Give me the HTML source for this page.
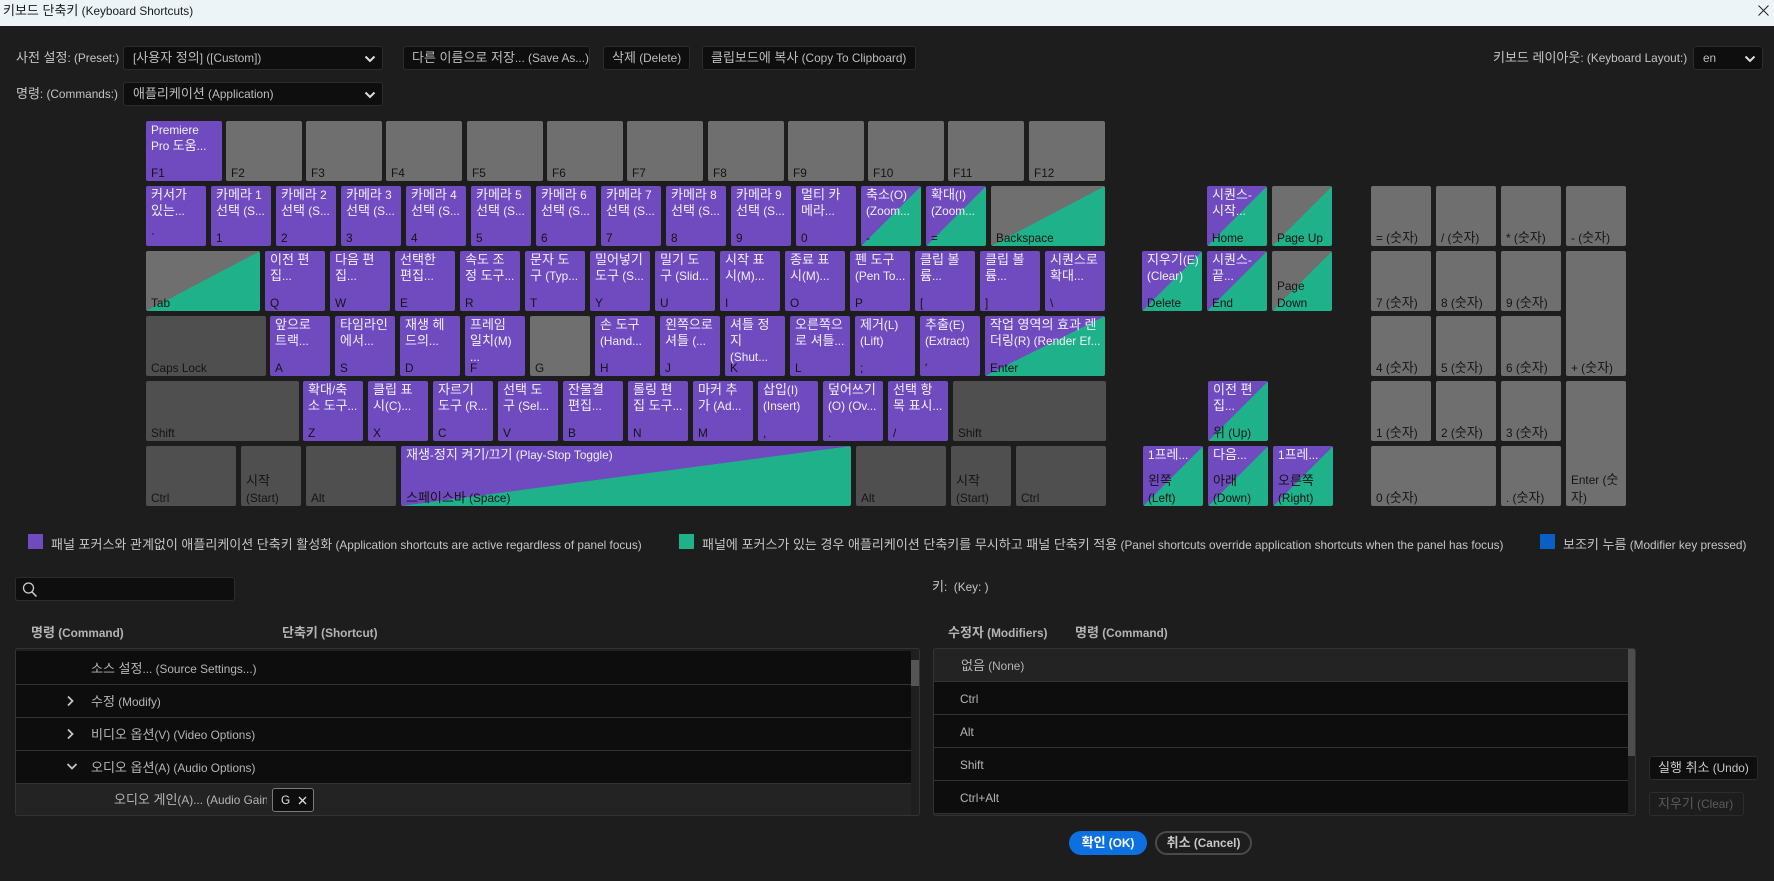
<!DOCTYPE html>
<html lang="ko"><head><meta charset="utf-8"><title>키보드 단축키 (Keyboard Shortcuts)</title>
<style>
html,body{margin:0;padding:0;background:#1d1d1d}
body{position:relative;width:1774px;height:881px;overflow:hidden;font:11.8px/16px "Liberation Sans","Noto Sans CJK KR",sans-serif;color:#c4c4c4}
div,span,svg{position:absolute;box-sizing:border-box}
span.ko{position:static;font-size:13px}
.l{white-space:nowrap}
.tb{left:0;top:0;width:1774px;height:26px;background:#ecf4f8;color:#1a1a1a}
.dd,.bt{background:#0e0e0e;border:1px solid #2c2c2c;border-radius:3px;height:24px;line-height:22px;padding-left:8px;color:#bdbdbd;white-space:nowrap}
.dd{padding-left:9px}
.k{border-radius:2px;color:#f2f0f8;overflow:hidden}
.p{background:#6f4bbf}
.g{background:#6f6f6f}
.d{background:#4f4f4f}
.pg{background:linear-gradient(to bottom right,#6f4bbf 50%,#1fb189 50.1%)}
.gg{background:linear-gradient(to bottom right,#6f6f6f 50%,#1fb189 50.1%)}
.t{left:5px;top:1px;right:2px;white-space:nowrap}
.b{left:5px;bottom:-1px;color:#141414;white-space:nowrap;line-height:17px}
.h{font-weight:bold;color:#b4b4b4;white-space:nowrap}
.r{left:0;height:33px;background:#0d0d0d;border-bottom:1px solid #333;white-space:nowrap;line-height:32px;color:#b5b5b5}
</style></head><body>
<div class="tb"><span class="l" style="left:3px;top:3px">키보드 단축키 (Keyboard Shortcuts)</span>
<svg style="left:1758px;top:5px" width="11" height="11" viewBox="0 0 11 11"><path d="M.5.5l10 10M10.5.5l-10 10" stroke="#222" fill="none"/></svg></div>

<span class="l" style="left:16px;top:50px">사전 설정: (Preset:)</span>
<div class="dd" style="left:123px;top:46px;width:260px">[사용자 정의] ([Custom])<svg style="left:240px;top:8px" width="12" height="8" viewBox="0 0 12 8"><path d="M1.500 1.500L6 6l4.500-4.500" stroke="#ddd" stroke-width="2" fill="none"/></svg></div>
<span class="l" style="left:16px;top:86px">명령: (Commands:)</span>
<div class="dd" style="left:123px;top:82px;width:260px">애플리케이션 (Application)<svg style="left:240px;top:8px" width="12" height="8" viewBox="0 0 12 8"><path d="M1.500 1.500L6 6l4.500-4.500" stroke="#ddd" stroke-width="2" fill="none"/></svg></div>
<div class="bt" style="left:403px;top:46px;width:187px">다른 이름으로 저장... (Save As...)</div>
<div class="bt" style="left:603px;top:46px;width:87px">삭제 (Delete)</div>
<div class="bt" style="left:702px;top:46px;width:214px">클립보드에 복사 (Copy To Clipboard)</div>
<span class="l" style="left:1493px;top:50px">키보드 레이아웃: (Keyboard Layout:)</span>
<div class="dd" style="left:1693px;top:46px;width:70px">en<svg style="left:50px;top:8px" width="12" height="8" viewBox="0 0 12 8"><path d="M1.500 1.500L6 6l4.500-4.500" stroke="#ddd" stroke-width="2" fill="none"/></svg></div>

<!-- F row -->
<div class="k p" style="left:146px;top:121px;width:76px;height:60px"><span class="t">Premiere<br>Pro 도움...</span><span class="b">F1</span></div>
<div class="k g" style="left:226px;top:121px;width:76px;height:60px"><span class="b">F2</span></div>
<div class="k g" style="left:306px;top:121px;width:76px;height:60px"><span class="b">F3</span></div>
<div class="k g" style="left:386px;top:121px;width:76px;height:60px"><span class="b">F4</span></div>
<div class="k g" style="left:467px;top:121px;width:76px;height:60px"><span class="b">F5</span></div>
<div class="k g" style="left:547px;top:121px;width:76px;height:60px"><span class="b">F6</span></div>
<div class="k g" style="left:627px;top:121px;width:76px;height:60px"><span class="b">F7</span></div>
<div class="k g" style="left:708px;top:121px;width:76px;height:60px"><span class="b">F8</span></div>
<div class="k g" style="left:788px;top:121px;width:76px;height:60px"><span class="b">F9</span></div>
<div class="k g" style="left:868px;top:121px;width:76px;height:60px"><span class="b">F10</span></div>
<div class="k g" style="left:948px;top:121px;width:76px;height:60px"><span class="b">F11</span></div>
<div class="k g" style="left:1029px;top:121px;width:76px;height:60px"><span class="b">F12</span></div>

<!-- number row -->
<div class="k p" style="left:146px;top:186px;width:60px;height:60px"><span class="t">커서가<br>있는...</span><span class="b">`</span></div>
<div class="k p" style="left:211px;top:186px;width:60px;height:60px"><span class="t">카메라 1<br>선택 (S...</span><span class="b">1</span></div>
<div class="k p" style="left:276px;top:186px;width:60px;height:60px"><span class="t">카메라 2<br>선택 (S...</span><span class="b">2</span></div>
<div class="k p" style="left:341px;top:186px;width:60px;height:60px"><span class="t">카메라 3<br>선택 (S...</span><span class="b">3</span></div>
<div class="k p" style="left:406px;top:186px;width:60px;height:60px"><span class="t">카메라 4<br>선택 (S...</span><span class="b">4</span></div>
<div class="k p" style="left:471px;top:186px;width:60px;height:60px"><span class="t">카메라 5<br>선택 (S...</span><span class="b">5</span></div>
<div class="k p" style="left:536px;top:186px;width:60px;height:60px"><span class="t">카메라 6<br>선택 (S...</span><span class="b">6</span></div>
<div class="k p" style="left:601px;top:186px;width:60px;height:60px"><span class="t">카메라 7<br>선택 (S...</span><span class="b">7</span></div>
<div class="k p" style="left:666px;top:186px;width:60px;height:60px"><span class="t">카메라 8<br>선택 (S...</span><span class="b">8</span></div>
<div class="k p" style="left:731px;top:186px;width:60px;height:60px"><span class="t">카메라 9<br>선택 (S...</span><span class="b">9</span></div>
<div class="k p" style="left:796px;top:186px;width:60px;height:60px"><span class="t">멀티 카<br>메라...</span><span class="b">0</span></div>
<div class="k pg" style="left:861px;top:186px;width:60px;height:60px"><span class="t">축소(O)<br>(Zoom...</span><span class="b">-</span></div>
<div class="k pg" style="left:926px;top:186px;width:60px;height:60px"><span class="t">확대(I)<br>(Zoom...</span><span class="b">=</span></div>
<div class="k gg" style="left:991px;top:186px;width:114px;height:60px"><span class="b">Backspace</span></div>

<!-- Q row -->
<div class="k gg" style="left:146px;top:251px;width:114px;height:60px"><span class="b">Tab</span></div>
<div class="k p" style="left:265px;top:251px;width:60px;height:60px"><span class="t">이전 편<br>집...</span><span class="b">Q</span></div>
<div class="k p" style="left:330px;top:251px;width:60px;height:60px"><span class="t">다음 편<br>집...</span><span class="b">W</span></div>
<div class="k p" style="left:395px;top:251px;width:60px;height:60px"><span class="t">선택한<br>편집...</span><span class="b">E</span></div>
<div class="k p" style="left:460px;top:251px;width:60px;height:60px"><span class="t">속도 조<br>정 도구...</span><span class="b">R</span></div>
<div class="k p" style="left:525px;top:251px;width:60px;height:60px"><span class="t">문자 도<br>구 (Typ...</span><span class="b">T</span></div>
<div class="k p" style="left:590px;top:251px;width:60px;height:60px"><span class="t">밀어넣기<br>도구 (S...</span><span class="b">Y</span></div>
<div class="k p" style="left:655px;top:251px;width:60px;height:60px"><span class="t">밀기 도<br>구 (Slid...</span><span class="b">U</span></div>
<div class="k p" style="left:720px;top:251px;width:60px;height:60px"><span class="t">시작 표<br>시(M)...</span><span class="b">I</span></div>
<div class="k p" style="left:785px;top:251px;width:60px;height:60px"><span class="t">종료 표<br>시(M)...</span><span class="b">O</span></div>
<div class="k p" style="left:850px;top:251px;width:60px;height:60px"><span class="t">펜 도구<br>(Pen To...</span><span class="b">P</span></div>
<div class="k p" style="left:915px;top:251px;width:60px;height:60px"><span class="t">클립 볼<br>륨...</span><span class="b">[</span></div>
<div class="k p" style="left:980px;top:251px;width:60px;height:60px"><span class="t">클립 볼<br>륨...</span><span class="b">]</span></div>
<div class="k p" style="left:1045px;top:251px;width:60px;height:60px"><span class="t">시퀀스로<br>확대...</span><span class="b">\</span></div>

<!-- A row -->
<div class="k d" style="left:146px;top:316px;width:120px;height:60px"><span class="b">Caps Lock</span></div>
<div class="k p" style="left:270px;top:316px;width:60px;height:60px"><span class="t">앞으로<br>트랙...</span><span class="b">A</span></div>
<div class="k p" style="left:335px;top:316px;width:60px;height:60px"><span class="t">타임라인<br>에서...</span><span class="b">S</span></div>
<div class="k p" style="left:400px;top:316px;width:60px;height:60px"><span class="t">재생 헤<br>드의...</span><span class="b">D</span></div>
<div class="k p" style="left:465px;top:316px;width:60px;height:60px"><span class="t">프레임<br>일치(M)<br>...</span><span class="b">F</span></div>
<div class="k g" style="left:530px;top:316px;width:60px;height:60px"><span class="b">G</span></div>
<div class="k p" style="left:595px;top:316px;width:60px;height:60px"><span class="t">손 도구<br>(Hand...</span><span class="b">H</span></div>
<div class="k p" style="left:660px;top:316px;width:60px;height:60px"><span class="t">왼쪽으로<br>셔틀 (...</span><span class="b">J</span></div>
<div class="k p" style="left:725px;top:316px;width:60px;height:60px"><span class="t">셔틀 정<br>지<br>(Shut...</span><span class="b">K</span></div>
<div class="k p" style="left:790px;top:316px;width:60px;height:60px"><span class="t">오른쪽으<br>로 셔틀...</span><span class="b">L</span></div>
<div class="k p" style="left:855px;top:316px;width:60px;height:60px"><span class="t">제거(L)<br>(Lift)</span><span class="b">;</span></div>
<div class="k p" style="left:920px;top:316px;width:60px;height:60px"><span class="t">추출(E)<br>(Extract)</span><span class="b">'</span></div>
<div class="k pg" style="left:985px;top:316px;width:120px;height:60px"><span class="t">작업 영역의 효과 렌<br>더링(R) (Render Ef...</span><span class="b">Enter</span></div>

<!-- Z row -->
<div class="k d" style="left:146px;top:381px;width:153px;height:60px"><span class="b">Shift</span></div>
<div class="k p" style="left:303px;top:381px;width:60px;height:60px"><span class="t">확대/축<br>소 도구...</span><span class="b">Z</span></div>
<div class="k p" style="left:368px;top:381px;width:60px;height:60px"><span class="t">클립 표<br>시(C)...</span><span class="b">X</span></div>
<div class="k p" style="left:433px;top:381px;width:60px;height:60px"><span class="t">자르기<br>도구 (R...</span><span class="b">C</span></div>
<div class="k p" style="left:498px;top:381px;width:60px;height:60px"><span class="t">선택 도<br>구 (Sel...</span><span class="b">V</span></div>
<div class="k p" style="left:563px;top:381px;width:60px;height:60px"><span class="t">잔물결<br>편집...</span><span class="b">B</span></div>
<div class="k p" style="left:628px;top:381px;width:60px;height:60px"><span class="t">롤링 편<br>집 도구...</span><span class="b">N</span></div>
<div class="k p" style="left:693px;top:381px;width:60px;height:60px"><span class="t">마커 추<br>가 (Ad...</span><span class="b">M</span></div>
<div class="k p" style="left:758px;top:381px;width:60px;height:60px"><span class="t">삽입(I)<br>(Insert)</span><span class="b">,</span></div>
<div class="k p" style="left:823px;top:381px;width:60px;height:60px"><span class="t">덮어쓰기<br>(O) (Ov...</span><span class="b">.</span></div>
<div class="k p" style="left:888px;top:381px;width:60px;height:60px"><span class="t">선택 항<br>목 표시...</span><span class="b">/</span></div>
<div class="k d" style="left:953px;top:381px;width:153px;height:60px"><span class="b">Shift</span></div>

<!-- bottom row -->
<div class="k d" style="left:146px;top:446px;width:90px;height:60px"><span class="b">Ctrl</span></div>
<div class="k d" style="left:241px;top:446px;width:60px;height:60px"><span class="b">시작<br>(Start)</span></div>
<div class="k d" style="left:306px;top:446px;width:90px;height:60px"><span class="b">Alt</span></div>
<div class="k pg" style="left:401px;top:446px;width:450px;height:60px"><span class="t">재생-정지 켜기/끄기 (Play-Stop Toggle)</span><span class="b">스페이스바 (Space)</span></div>
<div class="k d" style="left:856px;top:446px;width:90px;height:60px"><span class="b">Alt</span></div>
<div class="k d" style="left:951px;top:446px;width:60px;height:60px"><span class="b">시작<br>(Start)</span></div>
<div class="k d" style="left:1016px;top:446px;width:90px;height:60px"><span class="b">Ctrl</span></div>

<!-- nav -->
<div class="k pg" style="left:1207px;top:186px;width:60px;height:60px"><span class="t">시퀀스-<br>시작...</span><span class="b">Home</span></div>
<div class="k gg" style="left:1272px;top:186px;width:60px;height:60px"><span class="b">Page Up</span></div>
<div class="k pg" style="left:1142px;top:251px;width:60px;height:60px"><span class="t">지우기(E)<br>(Clear)</span><span class="b">Delete</span></div>
<div class="k pg" style="left:1207px;top:251px;width:60px;height:60px"><span class="t">시퀀스-<br>끝...</span><span class="b">End</span></div>
<div class="k gg" style="left:1272px;top:251px;width:60px;height:60px"><span class="b">Page<br>Down</span></div>
<div class="k pg" style="left:1208px;top:381px;width:60px;height:60px"><span class="t">이전 편<br>집...</span><span class="b">위 (Up)</span></div>
<div class="k pg" style="left:1143px;top:446px;width:60px;height:60px"><span class="t">1프레...</span><span class="b">왼쪽<br>(Left)</span></div>
<div class="k pg" style="left:1208px;top:446px;width:60px;height:60px"><span class="t">다음...</span><span class="b">아래<br>(Down)</span></div>
<div class="k pg" style="left:1273px;top:446px;width:60px;height:60px"><span class="t">1프레...</span><span class="b">오른쪽<br>(Right)</span></div>

<!-- numpad -->
<div class="k g" style="left:1371px;top:186px;width:60px;height:60px"><span class="b">= (숫자)</span></div>
<div class="k g" style="left:1436px;top:186px;width:60px;height:60px"><span class="b">/ (숫자)</span></div>
<div class="k g" style="left:1501px;top:186px;width:60px;height:60px"><span class="b">* (숫자)</span></div>
<div class="k g" style="left:1566px;top:186px;width:60px;height:60px"><span class="b">- (숫자)</span></div>
<div class="k g" style="left:1371px;top:251px;width:60px;height:60px"><span class="b">7 (숫자)</span></div>
<div class="k g" style="left:1436px;top:251px;width:60px;height:60px"><span class="b">8 (숫자)</span></div>
<div class="k g" style="left:1501px;top:251px;width:60px;height:60px"><span class="b">9 (숫자)</span></div>
<div class="k g" style="left:1566px;top:251px;width:60px;height:125px"><span class="b">+ (숫자)</span></div>
<div class="k g" style="left:1371px;top:316px;width:60px;height:60px"><span class="b">4 (숫자)</span></div>
<div class="k g" style="left:1436px;top:316px;width:60px;height:60px"><span class="b">5 (숫자)</span></div>
<div class="k g" style="left:1501px;top:316px;width:60px;height:60px"><span class="b">6 (숫자)</span></div>
<div class="k g" style="left:1371px;top:381px;width:60px;height:60px"><span class="b">1 (숫자)</span></div>
<div class="k g" style="left:1436px;top:381px;width:60px;height:60px"><span class="b">2 (숫자)</span></div>
<div class="k g" style="left:1501px;top:381px;width:60px;height:60px"><span class="b">3 (숫자)</span></div>
<div class="k g" style="left:1566px;top:381px;width:60px;height:125px"><span class="b">Enter (숫<br>자)</span></div>
<div class="k g" style="left:1371px;top:446px;width:125px;height:60px"><span class="b">0 (숫자)</span></div>
<div class="k g" style="left:1501px;top:446px;width:60px;height:60px"><span class="b">. (숫자)</span></div>

<!-- legend -->
<div style="left:28px;top:534px;width:15px;height:15px;background:#6f4bbf"></div>
<span class="l" style="left:51px;top:537px">패널 포커스와 관계없이 애플리케이션 단축키 활성화 (Application shortcuts are active regardless of panel focus)</span>
<div style="left:679px;top:534px;width:15px;height:15px;background:#1fb189"></div>
<span class="l" style="left:702px;top:537px">패널에 포커스가 있는 경우 애플리케이션 단축키를 무시하고 패널 단축키 적용 (Panel shortcuts override application shortcuts when the panel has focus)</span>
<div style="left:1540px;top:534px;width:15px;height:15px;background:#0a5fc4"></div>
<span class="l" style="left:1563px;top:537px">보조키 누름 (Modifier key pressed)</span>

<!-- search -->
<div style="left:15px;top:577px;width:220px;height:24px;background:#0e0e0e;border:1px solid #2c2c2c;border-radius:3px"></div>
<svg style="left:22px;top:582px" width="16" height="15" viewBox="0 0 16 15"><circle cx="6.500" cy="6" r="5" stroke="#ccc" stroke-width="1.300" fill="none"/><path d="M10 10l4.500 4.500" stroke="#ccc" stroke-width="1.500" fill="none"/></svg>
<span class="l" style="left:932px;top:579px">키:&nbsp; (Key: )</span>

<span class="h" style="left:31px;top:625px">명령 (Command)</span>
<span class="h" style="left:282px;top:625px">단축키 (Shortcut)</span>
<span class="h" style="left:948px;top:625px">수정자 (Modifiers)</span>
<span class="h" style="left:1075px;top:625px">명령 (Command)</span>

<!-- left table -->
<div style="left:15px;top:648px;width:905px;height:168px;border:1px solid #333;border-radius:3px;background:#1f1f1f;overflow:hidden">
<div class="r" style="top:2px;width:895px;height:34px"><span class="l" style="left:75px;top:1px;line-height:33px">소스 설정... (Source Settings...)</span></div>
<div class="r" style="top:36px;width:895px"><span class="l" style="left:75px;top:1px">수정 (Modify)</span></div>
<div class="r" style="top:69px;width:895px"><span class="l" style="left:75px;top:1px">비디오 옵션(V) (Video Options)</span></div>
<div class="r" style="top:102px;width:895px"><span class="l" style="left:75px;top:1px">오디오 옵션(A) (Audio Options)</span></div>
<div class="r" style="top:135px;width:895px;height:32px;background:#232323;border:0"><span style="left:98px;top:0;width:153px;overflow:hidden;white-space:nowrap">오디오 게인(A)... (Audio Gain</span></div>
<div style="left:895px;top:11px;width:8px;height:26px;background:#555"></div>
</div>
<svg style="left:66px;top:695px" width="10" height="12" viewBox="0 0 10 12"><path d="M2 1.500L6.500 6 2 10.500" stroke="#c4c4c4" stroke-width="1.800" fill="none"/></svg>
<svg style="left:66px;top:728px" width="10" height="12" viewBox="0 0 10 12"><path d="M2 1.500L6.500 6 2 10.500" stroke="#c4c4c4" stroke-width="1.800" fill="none"/></svg>
<svg style="left:66px;top:762px" width="12" height="10" viewBox="0 0 12 10"><path d="M1.500 2L6 6.500 10.500 2" stroke="#c4c4c4" stroke-width="1.800" fill="none"/></svg>
<div style="left:272px;top:788px;width:42px;height:24px;background:#0e0e0e;border:1px solid #7a7a7a;border-radius:3px;color:#ddd;line-height:22px"><span class="l" style="left:8px;top:0">G</span>
<svg style="left:25px;top:7px" width="9" height="9" viewBox="0 0 9 9"><path d="M1 1l7 7M8 1l-7 7" stroke="#ddd" stroke-width="1.300" fill="none"/></svg></div>

<!-- right table -->
<div style="left:933px;top:648px;width:703px;height:168px;border:1px solid #333;border-radius:3px;background:#1f1f1f;overflow:hidden">
<div class="r" style="top:0;width:694px;background:#232323"><span class="l" style="left:27px;top:1px">없음 (None)</span></div>
<div class="r" style="top:33px;width:694px"><span class="l" style="left:26px;top:1px">Ctrl</span></div>
<div class="r" style="top:66px;width:694px"><span class="l" style="left:26px;top:1px">Alt</span></div>
<div class="r" style="top:99px;width:694px"><span class="l" style="left:26px;top:1px">Shift</span></div>
<div class="r" style="top:132px;width:694px"><span class="l" style="left:26px;top:1px">Ctrl+Alt</span></div>
<div style="left:694px;top:0;width:8px;height:107px;background:#4d4d4d"></div>
</div>

<div class="bt" style="left:1649px;top:756px;width:109px;color:#c8c8c8">실행 취소 (Undo)</div>
<div class="bt" style="left:1649px;top:792px;width:95px;background:#1d1d1d;color:#5c5c5c">지우기 (Clear)</div>
<div style="left:1069px;top:831px;width:78px;height:24px;border-radius:12px;background:#0e6fe0;color:#fff;font-weight:bold;text-align:center;line-height:24px">확인 (OK)</div>
<div style="left:1155px;top:831px;width:97px;height:24px;border-radius:12px;border:2px solid #4a4a4a;color:#c8c8c8;font-weight:bold;text-align:center;line-height:20px">취소 (Cancel)</div>
<script>
(function(){
var w=document.createTreeWalker(document.body,NodeFilter.SHOW_TEXT),n=[],x;
while(x=w.nextNode()){if(x.parentNode.tagName!=='SCRIPT'&&/[\uAC00-\uD7A3]/.test(x.nodeValue))n.push(x);}
var re=/[\uAC00-\uD7A3]+(?: [\uAC00-\uD7A3]+)*/g;
n.forEach(function(t){
var f=document.createDocumentFragment(),s=t.nodeValue,i=0,m;
while(m=re.exec(s)){
if(m.index>i)f.appendChild(document.createTextNode(s.slice(i,m.index)));
var e=document.createElement('span');e.className='ko';e.textContent=m[0];f.appendChild(e);
i=m.index+m[0].length;
}
if(i<s.length)f.appendChild(document.createTextNode(s.slice(i)));
t.parentNode.replaceChild(f,t);
});
})();
</script>
</body></html>
